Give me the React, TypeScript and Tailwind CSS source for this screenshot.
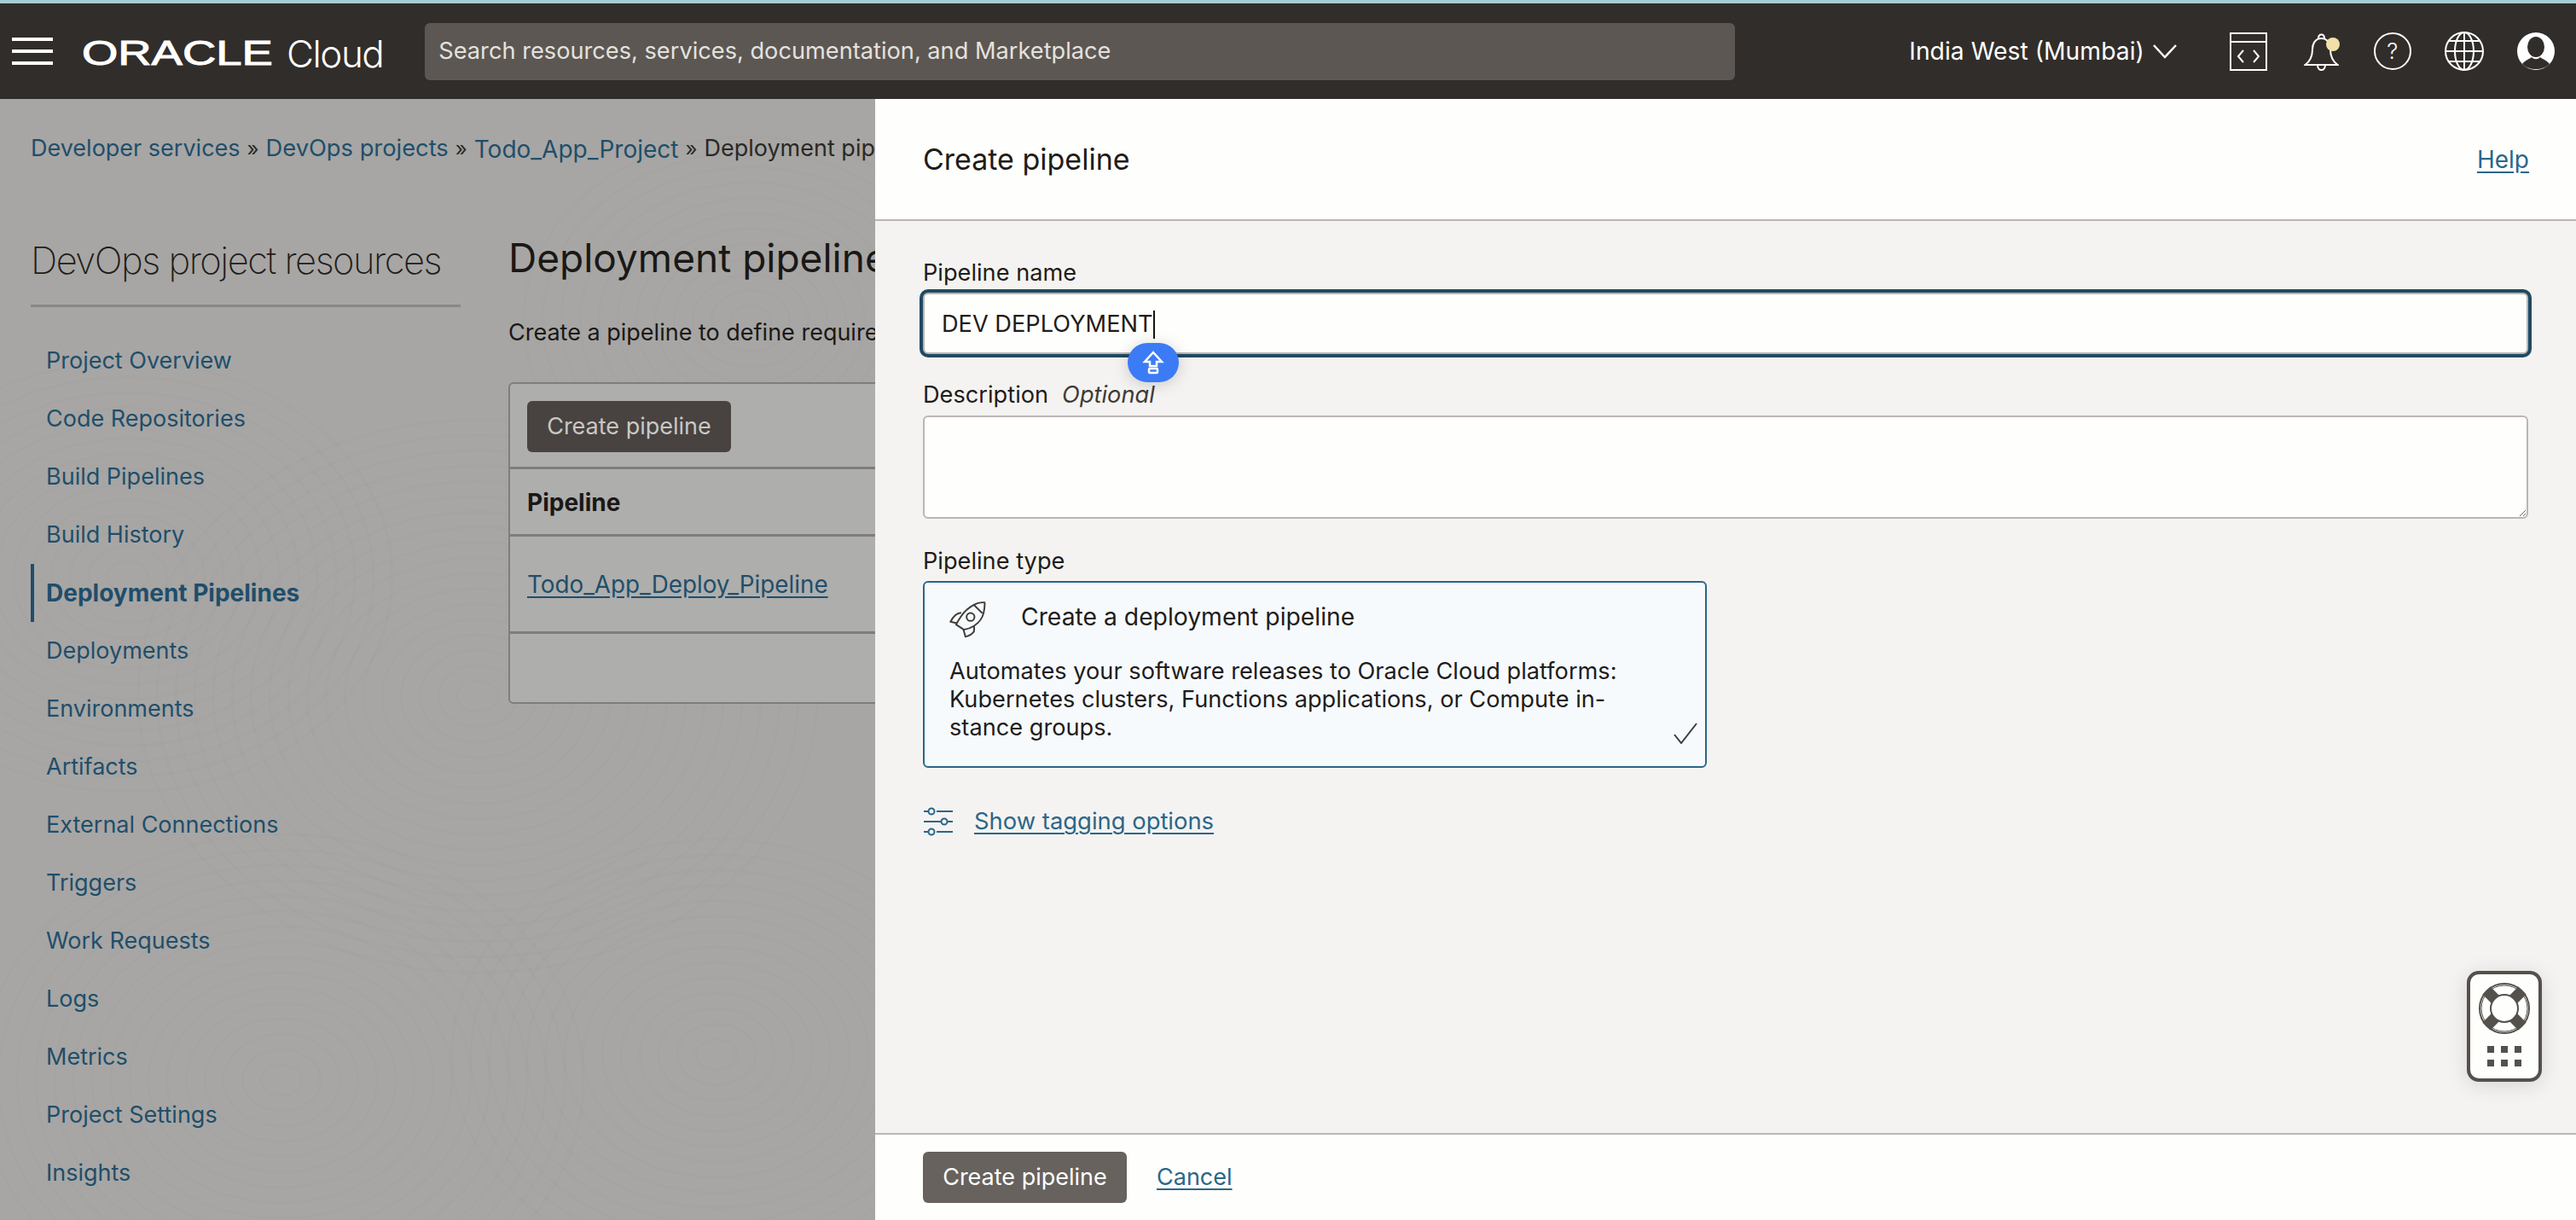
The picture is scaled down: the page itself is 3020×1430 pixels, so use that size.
const sans = "font-['Inter','Noto_Sans',sans-serif]";

const navItems = [
  "Project Overview",
  "Code Repositories",
  "Build Pipelines",
  "Build History",
  "Deployment Pipelines",
  "Deployments",
  "Environments",
  "Artifacts",
  "External Connections",
  "Triggers",
  "Work Requests",
  "Logs",
  "Metrics",
  "Project Settings",
  "Insights",
];

const swirls = [
  { cx: 150, cy: 560, n: 14 },
  { cx: 560, cy: 700, n: 18 },
  { cx: 880, cy: 260, n: 12 },
  { cx: 330, cy: 1150, n: 16 },
  { cx: 840, cy: 1120, n: 14 },
];

function CodeIcon() {
  return (
    <svg width="44" height="45" viewBox="0 0 44 45" fill="none" stroke="#fff" strokeWidth="2">
      <rect x="1" y="1" width="42" height="43" />
      <path d="M1 11h42" />
      <path d="M16 21l-6 7 6 7M28 21l6 7-6 7" />
    </svg>
  );
}

function BellIcon() {
  return (
    <div className="relative w-[41px] h-[45px]">
      <svg width="41" height="45" viewBox="0 0 41 45" fill="none" stroke="#fff" strokeWidth="2">
        <path d="M20.5 7c-7 0-10.500 6-10.500 13 0 8-3 14-8.500 18h38c-5.500-4-8.500-10-8.500-18 0-7-3.500-13-10.500-13z" />
        <path d="M17 7c0-6 7-6 7 0M16 38c0 8 9 8 9 0" />
      </svg>
      <div className="absolute left-[26px] top-[6px] w-4 h-4 rounded-full bg-[#f3e0a8]" />
    </div>
  );
}

function HelpIcon() {
  return (
    <div className="w-[44px] h-[44px] rounded-full border-2 border-white flex items-center justify-center text-white text-[26px] font-light leading-none">
      ?
    </div>
  );
}

function GlobeIcon() {
  return (
    <svg width="46" height="46" viewBox="0 0 46 46" fill="none" stroke="#fff" strokeWidth="2">
      <circle cx="23" cy="23" r="22" />
      <ellipse cx="23" cy="23" rx="11" ry="22" />
      <path d="M23 1v44M1 23h44M5 11h36M5 35h36" />
    </svg>
  );
}

function AvatarIcon() {
  return (
    <svg width="44" height="44" viewBox="0 0 44 44">
      <circle cx="22" cy="22" r="22" fill="#fff" />
      <ellipse cx="22" cy="17" rx="10" ry="12" fill="#312d2a" />
      <path d="M6 37c4-5 9-6 11-8 3 3 7 3 10 0 2 2 7 3 11 8-4 4-10 6-16 6s-12-2-16-6z" fill="#312d2a" />
    </svg>
  );
}

function RocketIcon() {
  return (
    <svg width="43" height="43" viewBox="38 28 130 130" fill="none" stroke="#3f3b37" strokeWidth="6" strokeLinejoin="round">
      <path d="M163 32c-14-2-28 2-38 8-18 10-34 24-45 40-6 9-14 20-18 30l28 18c12-2 24-6 35-13 18-12 30-28 34-45 3-12 5-26 4-38z" />
      <path d="M125 40l30 30" />
      <circle cx="113" cy="83" r="14" />
      <path d="M80 68c-12 0-25 7-38 32l23 5" />
      <path d="M125 115c2 8 1 14 0 20-8 10-18 15-30 18l-7-25" />
    </svg>
  );
}

function TagIcon() {
  return (
    <svg width="34" height="34" viewBox="0 0 34 34" fill="none" stroke="#2b6689" strokeWidth="2">
      <circle cx="9" cy="5" r="3.500" />
      <path d="M0 5h5M15 5h19" />
      <circle cx="24" cy="17" r="3.500" />
      <path d="M0 17h20M28 17h6" />
      <circle cx="9" cy="29" r="3.500" />
      <path d="M0 29h5M15 29h19" />
    </svg>
  );
}

function HelpWidget() {
  return (
    <div className="absolute left-[1866px] top-[879px] w-[88px] h-[130px] rounded-[14px] border-4 border-[#54514c] bg-[#fefefc] shadow-[0_4px_24px_rgba(0,0,0,0.12)] flex flex-col items-center pt-[10px]">
      <svg width="60" height="60" viewBox="0 0 60 60">
        <circle cx="30" cy="30" r="29" fill="#fefefc" stroke="#54514c" strokeWidth="2" />
        <path d="M9 9l14 14M51 9L37 23M9 51l14-14M51 51L37 37" stroke="#54514c" strokeWidth="13" />
        <circle cx="30" cy="30" r="27" fill="none" stroke="#54514c" strokeWidth="1" />
        <circle cx="30" cy="30" r="16" fill="#fefefc" stroke="#54514c" strokeWidth="2" />
      </svg>
      <div className="grid grid-cols-3 gap-x-2 gap-y-2 mt-[14px]">
        {[0, 1, 2, 3, 4, 5].map((i) => (
          <div key={i} className="w-2 h-2 bg-[#54514c]" />
        ))}
      </div>
    </div>
  );
}

function Header() {
  return (
    <header className="h-[112px] bg-[#312d2a] flex items-center shrink-0 text-white">
      <div className="ml-[14px] w-[48px] flex flex-col gap-[10px]">
        <div className="h-1 bg-white" />
        <div className="h-1 bg-white" />
        <div className="h-1 bg-white" />
      </div>
      <div className="ml-[34px] w-[240px] pt-[4px]">
        <span className="inline-block origin-left scale-x-[1.36] font-['Liberation_Sans',sans-serif] text-[40px] [-webkit-text-stroke:1px_#fff] leading-none whitespace-nowrap">
          ORACLE
        </span>
      </div>
      <span className="pt-[5px] font-light text-[44px] tracking-[-1.500px] leading-none whitespace-nowrap">Cloud</span>
      <div className="ml-[49px] w-[1536px] h-[67px] rounded-[6px] bg-[#5c5753] flex items-center px-4 text-[27.200px] text-[#e4e2df] whitespace-nowrap">
        Search resources, services, documentation, and Marketplace
      </div>
      <div className="ml-[204px] text-[28.300px] whitespace-nowrap leading-none">India West (Mumbai)</div>
      <svg className="ml-[10px]" width="28" height="18" viewBox="0 0 28 18" fill="none" stroke="#fff" strokeWidth="2.500">
        <path d="M1 2l13 14L27 2" />
      </svg>
      <div className="ml-[62px] flex items-center">
        <CodeIcon />
        <div className="ml-[43px]">
          <BellIcon />
        </div>
        <div className="ml-[41px]">
          <HelpIcon />
        </div>
        <div className="ml-[39px]">
          <GlobeIcon />
        </div>
        <div className="ml-[39px]">
          <AvatarIcon />
        </div>
      </div>
    </header>
  );
}

function PageBehind() {
  return (
    <div className="relative w-[1026px] shrink-0 overflow-hidden bg-[#a7a6a4] text-[#1f4e6b] text-[27px] whitespace-nowrap">
      {/* faint contour texture behind the dimmed page */}
      <svg className="absolute inset-0" width="1026" height="1314" fill="none" stroke="#000" strokeOpacity="0.012" strokeWidth="3">
        {swirls.map((s) =>
          Array.from({ length: s.n }).map((_, i) => (
            <ellipse key={`${s.cx}-${i}`} cx={s.cx} cy={s.cy} rx={24 + i * 22} ry={18 + i * 18} />
          ))
        )}
      </svg>
      <div className="relative">
        <div className="h-[116px] pl-9 pt-[1px] flex items-center">
          <span>Developer services</span>
          <span className="mx-[8px] text-[24px] text-[#2b2825]">»</span>
          <span className="text-[27.300px]">DevOps projects</span>
          <span className="mx-[8px] text-[24px] text-[#2b2825]">»</span>
          <span className="text-[28px]">Todo_App_Project</span>
          <span className="mx-[8px] text-[24px] text-[#2b2825]">»</span>
          <span className="text-[#2b2825]">Deployment pipelines</span>
        </div>
        <div className="flex">
          <aside className="ml-9 w-[504px] shrink-0">
            <h2 className="h-[128px] pt-[23px] flex items-center border-b-[3px] border-[#8a8886] text-[43.500px] font-extralight tracking-[-1.500px] text-[#1f1c1a]">
              DevOps project resources
            </h2>
            <nav className="mt-[29px]">
              {navItems.map((item) => (
                <div
                  key={item}
                  className={
                    item === "Deployment Pipelines"
                      ? "h-[68px] flex items-center border-l-4 border-[#1f4e6b] pl-[14px] text-[28px] font-bold"
                      : "h-[68px] flex items-center pl-[18px]"
                  }
                >
                  {item}
                </div>
              ))}
            </nav>
          </aside>
          <main className="ml-[56px] w-[1200px] shrink-0 text-[#1a1816]">
            <h1 className="mt-[30px] h-[80px] flex items-center text-[46px] font-normal">Deployment pipelines</h1>
            <p className="mt-[30px] h-[36px] leading-[36px]">Create a pipeline to define required stages for your deployment</p>
            <div className="mt-[40px] h-[377px] rounded-[6px] border-2 border-[#807d7b] bg-[#aeaeac]">
              <div className="h-[100px] pl-5 pt-5 border-b-[3px] border-[#807d7b]">
                <div className="w-[239px] h-[60px] rounded-[6px] bg-[#484340] text-[#c9c8c5] flex items-center justify-center">
                  Create pipeline
                </div>
              </div>
              <div className="h-[79px] pl-5 pt-[2px] flex items-center border-b-[3px] border-[#807d7b] text-[28px] font-bold">Pipeline</div>
              <div className="h-[114px] pl-5 pt-[2px] flex items-center border-b-[3px] border-[#807d7b] text-[#1f4e6b] text-[27.800px]">
                <span className="underline underline-offset-4">Todo_App_Deploy_Pipeline</span>
              </div>
            </div>
          </main>
        </div>
      </div>
    </div>
  );
}

function PanelBody() {
  return (
    <div className="relative flex-1 bg-[#f4f3f1] pl-[56px] pr-[56px] pt-[43px] text-[27.200px] text-[#1f1c1a]">
      <div className="h-[36px] leading-[36px]">Pipeline name</div>
      <div className="mt-[5px] h-[72px] rounded-[6px] border-2 border-[#bcb6b1] bg-[#fefefc] ring-4 ring-[#1f4a63] flex items-center pl-[20px] pt-[2px] leading-none">
        DEV DEPLOYMENT
        <span className="w-[2px] h-[33px] bg-[#161513]" />
      </div>
      <div className="absolute left-[296px] top-[143px] w-[60px] h-[46px] rounded-full bg-[#3b7bf6] shadow-[0_2px_18px_rgba(0,0,0,0.18)] flex items-center justify-center">
        <svg width="28" height="28" viewBox="0 0 28 28" fill="none" stroke="#fff" strokeWidth="2.500">
          <path d="M14 2L4 13h6v5h8v-5h6z" />
          <rect x="9" y="21" width="10" height="5" rx="1" />
        </svg>
      </div>
      <div className="mt-[30px] h-[36px] leading-[36px]">
        Description<span className="ml-4 italic text-[#3f3b37]">Optional</span>
      </div>
      <textarea
        readOnly
        className="block mt-[6px] w-full h-[121px] rounded-[6px] border-2 border-[#bcb6b1] bg-[#fefefc] resize-y outline-none"
      />
      <div className="mt-[32px] h-[36px] leading-[36px]">Pipeline type</div>
      <div className="relative mt-[5px] w-[919px] h-[219px] rounded-[6px] border-2 border-[#2b6689] bg-[#f6fafd] pl-[29px] pt-[22px]">
        <div className="flex items-center gap-[41px] h-[42px]">
          <RocketIcon />
          <span className="leading-none text-[28.300px] mb-[6px]">Create a deployment pipeline</span>
        </div>
        <p className="mt-[23px] leading-[33px]">
          Automates your software releases to Oracle Cloud platforms:
          <br />
          Kubernetes clusters, Functions applications, or Compute in-
          <br />
          stance groups.
        </p>
        <svg className="absolute right-[9px] bottom-[26px]" width="28" height="25" viewBox="0 0 28 25" fill="none" stroke="#3f3b37" strokeWidth="2">
          <path d="M1 14l8 10L27 1" />
        </svg>
      </div>
      <div className="mt-[46px] flex items-center h-[34px] gap-[25px] pl-[1px]">
        <TagIcon />
        <span className="text-[27.400px] text-[#2b6689] underline underline-offset-4">Show tagging options</span>
      </div>
      <HelpWidget />
    </div>
  );
}

export default function App() {
  return (
    <div className={`w-[3020px] h-[1430px] overflow-hidden flex flex-col ${sans}`}>
      <div className="h-1 bg-[#a6cdd6] shrink-0" />
      <Header />
      <div className="flex flex-1 min-h-0">
        <PageBehind />
        <section className="flex-1 flex flex-col bg-[#fefefc]">
          <div className="h-[143px] shrink-0 border-b-2 border-[#bcb6b1] pl-[56px] pr-[55px] flex items-center justify-between">
            <h2 className="text-[34px] text-[#1f1c1a] font-normal">Create pipeline</h2>
            <a className="text-[28px] text-[#2b6689] underline underline-offset-4">Help</a>
          </div>
          <PanelBody />
          <div className="h-[102px] shrink-0 border-t-2 border-[#bcb6b1] pl-[56px] flex items-center gap-[35px] text-[27px]">
            <div className="w-[239px] h-[60px] rounded-[6px] bg-[#67625d] text-white flex items-center justify-center">
              Create pipeline
            </div>
            <a className="text-[#2b6689] underline underline-offset-4">Cancel</a>
          </div>
        </section>
      </div>
    </div>
  );
}
